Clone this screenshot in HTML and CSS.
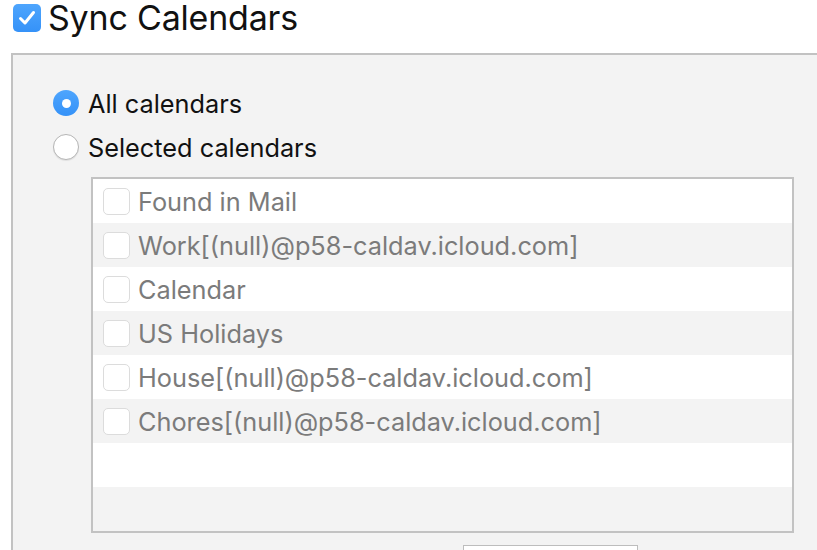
FILE: index.html
```html
<!DOCTYPE html>
<html>
<head>
<meta charset="utf-8">
<link rel="stylesheet" href="styles.css">
</head>
<body>
<div class="header">
  <span class="check-on">
    <svg width="28" height="28" viewBox="0 0 28 28"><polyline points="7.5,14.5 12,19 20.5,8.5" fill="none" stroke="#fff" stroke-width="3" stroke-linecap="round" stroke-linejoin="round"/></svg>
  </span>
  <span class="title">Sync Calendars</span>
</div>
<div class="panel">
  <div class="radio-row">
    <span class="radio radio-on"><span class="dot"></span></span>
    <span class="radio-label">All calendars</span>
  </div>
  <div class="radio-row">
    <span class="radio radio-off"></span>
    <span class="radio-label">Selected calendars</span>
  </div>
  <div class="list">
    <div class="row"><span class="cb"></span><span class="item">Found in Mail</span></div>
    <div class="row alt"><span class="cb"></span><span class="item">Work[(null)@p58-caldav.icloud.com]</span></div>
    <div class="row"><span class="cb"></span><span class="item">Calendar</span></div>
    <div class="row alt"><span class="cb"></span><span class="item">US Holidays</span></div>
    <div class="row"><span class="cb"></span><span class="item">House[(null)@p58-caldav.icloud.com]</span></div>
    <div class="row alt"><span class="cb"></span><span class="item">Chores[(null)@p58-caldav.icloud.com]</span></div>
    <div class="row"></div>
    <div class="row alt"></div>
  </div>
  <div class="bottom-box"></div>
</div>
</body>
</html>
```
FILE: styles.css
```css
html, body {
  margin: 0;
  padding: 0;
  background: #ffffff;
  overflow: hidden;
}
body {
  font-family: Inter, "Liberation Sans", sans-serif;
  width: 817px;
  height: 550px;
}
.header {
  display: flex;
  align-items: center;
  padding: 0 0 0 13px;
  height: 36px;
  gap: 7px;
}
.check-on {
  width: 28px;
  height: 28px;
  border-radius: 5px;
  background: linear-gradient(#4ea5fd, #3592f8);
  display: flex;
  flex: none;
}
.title {
  font-size: 34px;
  color: #111;
  letter-spacing: -0.2px;
  line-height: 36px;
  white-space: nowrap;
}
.panel {
  margin: 17px 0 0 11px;
  border-top: 2px solid #c2c2c2;
  border-left: 2px solid #c2c2c2;
  background: #f3f3f3;
  height: 460px;
  padding: 35px 0 0 40px;
  overflow: hidden;
}
.radio-row {
  display: flex;
  align-items: center;
  height: 26px;
  margin-bottom: 18px;
  gap: 9px;
}
.radio {
  width: 26px;
  height: 26px;
  border-radius: 50%;
  box-sizing: border-box;
  display: flex;
  align-items: center;
  justify-content: center;
  flex: none;
}
.radio-on {
  background: linear-gradient(#4ea5fd, #3592f8);
}
.dot {
  width: 9px;
  height: 9px;
  border-radius: 50%;
  background: #fff;
}
.radio-off {
  background: #fff;
  border: 1px solid #b5b5b5;
  box-shadow: 0 1px 1px rgba(0,0,0,0.08);
}
.radio-label {
  font-size: 25.3px;
  color: #111;
}
.list {
  margin: -1px 0 0 38px;
  width: 699px;
  height: 352px;
  border: 2px solid #c2c2c2;
  background: #fff;
}
.row {
  height: 44px;
  display: flex;
  align-items: center;
  padding-left: 10px;
  gap: 8px;
  background: #fff;
}
.row.alt {
  background: #f3f3f3;
}
.cb {
  width: 27px;
  height: 27px;
  box-sizing: border-box;
  border: 1px solid #dcdcdc;
  border-radius: 5px;
  background: #fff;
  flex: none;
}
.item {
  font-size: 25.3px;
  color: #7b7b7b;
  white-space: nowrap;
}
.bottom-box {
  margin: 12px 0 0 410px;
  width: 173px;
  height: 30px;
  border: 1px solid #bdbdbd;
  background: #fff;
}
```
